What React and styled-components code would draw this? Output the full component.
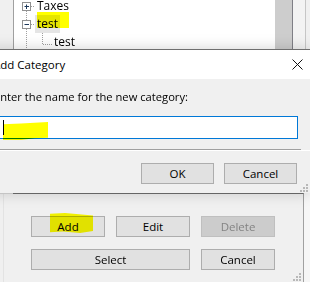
import React from "react";
import styled, { createGlobalStyle } from "styled-components";

const GlobalStyle = createGlobalStyle`
  html, body { margin: 0; padding: 0; background: #f0f0f0; }
  body {
    font-family: "Open Sans", "Noto Sans", sans-serif;
    font-size: 12px;
    color: #000;
  }
`;

const Screen = styled.div`
  width: 310px;
  height: 282px;
  overflow: hidden;
  display: flex;
  flex-direction: column;
  background: #f0f0f0;
`;

/* ---------- window behind, top part (tree) ---------- */

const BackTop = styled.div`
  flex: none;
  height: 49px;
  display: flex;
`;

const SideStrip = styled.div`
  width: 13px;
  flex: none;
  background: #f0f0f0;
  overflow: hidden;
  font-size: 12px;
  line-height: 16px;
  white-space: nowrap;
  padding-top: 2px;
  box-sizing: border-box;
`;

const SideText = styled.div`
  margin-left: -8px;
`;

const TreeBox = styled.div`
  width: 261px;
  flex: none;
  background: #fff;
  border-left: 1px solid #a0a0a0;
  overflow: hidden;
`;

const TreeList = styled.div`
  margin-top: -3px;
`;

const TreeRow = styled.div`
  height: 18px;
  display: flex;
  align-items: center;
`;

const NodeLabel = styled.span`
  position: relative;
  height: 18px;
  line-height: 18px;
  padding: 0 2px;
  background: ${(p) => (p.$selected ? "#e5e5e5" : "transparent")};
`;

const Marker = styled.span`
  position: absolute;
  left: ${(p) => p.$left}px;
  top: ${(p) => p.$top}px;
  width: ${(p) => p.$w}px;
  height: ${(p) => p.$h}px;
  background: #ffff00;
  mix-blend-mode: multiply;
  clip-path: ${(p) => p.$clip || "none"};
  pointer-events: none;
`;

const Scrollbar = styled.div`
  width: 17px;
  flex: none;
  background: #cdcdcd;
`;

const FrameLine = styled.div`
  width: 1px;
  flex: none;
  background: ${(p) => p.$color};
`;

const FrameGap = styled.div`
  width: ${(p) => p.$w}px;
  flex: none;
  background: ${(p) => p.$color || "#f0f0f0"};
`;

/* ---------- dialog ---------- */

const Dialog = styled.div`
  position: relative;
  z-index: 1;
  flex: none;
  margin-left: -12px;
  border-top: 1px solid #6f6f6f;
  background: #f0f0f0;
  box-shadow: 0 0 14px rgba(0, 0, 0, 0.18);
  font-size: 11px;
`;

const TitleBar = styled.div`
  height: 29px;
  background: #fff;
  display: flex;
  align-items: center;
  padding-left: 5px;
`;

const Title = styled.span`
  font-size: 11.5px;
`;

const CloseBox = styled.div`
  margin-left: auto;
  margin-right: 7px;
  display: flex;
`;

const DialogBody = styled.div`
  padding: 10px 0 0 6px;
`;

const Prompt = styled.div`
  line-height: 16px;
  font-size: 11.2px;
`;

const TextBox = styled.div`
  position: relative;
  margin: 11px 12px 0 0;
  height: 23px;
  box-sizing: border-box;
  border: 1px solid #0078d7;
  background: #fff;
  display: flex;
  align-items: center;
  padding-left: 8px;
`;

const Caret = styled.span`
  width: 1px;
  height: 15px;
  margin-top: -1px;
  background: #000;
`;

const Separator = styled.div`
  margin: 10px 9px 0 0;
  border-top: 1px solid #a0a0a0;
`;

const ButtonBar = styled.div`
  border-top: 1px solid #fff;
  padding: 12px 13px 9px 0;
  display: flex;
  justify-content: flex-end;
  gap: 10px;
`;

const Button = styled.div`
  position: relative;
  box-sizing: border-box;
  width: ${(p) => p.$w || 73}px;
  height: 21px;
  display: flex;
  align-items: center;
  justify-content: center;
  font-size: 11.5px;
  background: ${(p) => (p.$disabled ? "#cccccc" : "#e1e1e1")};
  border: 1px solid ${(p) => (p.$disabled ? "#bfbfbf" : "#adadad")};
  color: ${(p) => (p.$disabled ? "#838383" : "#000")};
  grid-column: ${(p) => (p.$span ? `span ${p.$span}` : "auto")};
`;

const Grip = styled.div`
  position: absolute;
  right: ${(p) => p.$right}px;
  bottom: ${(p) => p.$bottom}px;
  display: flex;
`;

/* ---------- window behind, bottom part ---------- */

const BackBottom = styled.div`
  flex: 1;
  display: flex;
`;

const BottomSide = styled.div`
  width: 13px;
  flex: none;
  box-sizing: border-box;
  border-top: 1px solid #d6d6d6;
  background: linear-gradient(to right, #f0f0f0 3px, #e3e3e3 3px, #e3e3e3 4px, #f0f0f0 4px);
`;

const Panel = styled.div`
  position: relative;
  width: 272px;
  flex: none;
  border-top: 1px solid #6f6f6f;
  border-right: 1px solid #a0a0a0;
  padding: 22px 0 0 18px;
`;

const ButtonGrid = styled.div`
  display: grid;
  grid-template-columns: 74px 74px 74px;
  grid-auto-rows: 21px;
  column-gap: 11px;
  row-gap: 12px;
`;

const BottomRight = styled.div`
  flex: 1;
  background: #f6f6f6;
`;

/* ---------- drawings ---------- */

const Expander = ({ open, lineAbove }) => (
  <svg width="21" height="18" style={{ flex: "none", display: "block" }}>
    {lineAbove && (
      <line x1="12.5" y1="0" x2="12.5" y2="5" stroke="#a0a0a0" strokeDasharray="1 1" />
    )}
    <line x1="12.5" y1="14" x2="12.5" y2="18" stroke="#a0a0a0" strokeDasharray="1 1" />
    <line x1="17" y1="9.5" x2="21" y2="9.5" stroke="#a0a0a0" strokeDasharray="1 1" />
    <rect x="8.5" y="5.5" width="8" height="8" fill="#fff" stroke="#919191" />
    <line x1="10.5" y1="9.5" x2="15" y2="9.5" stroke="#1e395b" />
    {!open && <line x1="12.5" y1="7.5" x2="12.5" y2="12" stroke="#1e395b" />}
  </svg>
);

const ChildLines = () => (
  <>
    <svg width="21" height="18" style={{ flex: "none", display: "block" }}>
      <line x1="12.5" y1="0" x2="12.5" y2="18" stroke="#a0a0a0" strokeDasharray="1 1" />
    </svg>
    <svg width="17" height="18" style={{ flex: "none", display: "block" }}>
      <line x1="7.5" y1="0" x2="7.5" y2="11" stroke="#a0a0a0" strokeDasharray="1 1" />
      <line x1="8" y1="11.5" x2="17" y2="11.5" stroke="#a0a0a0" strokeDasharray="1 1" />
    </svg>
  </>
);

const CloseIcon = () => (
  <svg width="11" height="11" viewBox="0 0 11 11">
    <path d="M0.5 0.5 L10.5 10.5 M10.5 0.5 L0.5 10.5" stroke="#111" strokeWidth="1" />
  </svg>
);

const GripDots = () => (
  <svg width="8" height="8" viewBox="0 0 8 8">
    {[
      [6, 0],
      [3, 3],
      [6, 3],
      [0, 6],
      [3, 6],
      [6, 6],
    ].map(([x, y]) => (
      <rect key={`${x}-${y}`} x={x} y={y} width="2" height="2" fill="#b8b8b8" />
    ))}
  </svg>
);

export default function App() {
  return (
    <Screen>
      <GlobalStyle />
      <BackTop>
        <SideStrip>
          <SideText>ξ</SideText>
          <SideText>&nbsp;</SideText>
          <SideText>r</SideText>
        </SideStrip>
        <TreeBox>
          <TreeList>
            <TreeRow>
              <Expander />
              <NodeLabel>Taxes</NodeLabel>
            </TreeRow>
            <TreeRow>
              <Expander open lineAbove />
              <NodeLabel $selected>
                <Marker $left={2} $top={-3} $w={32} $h={16} />
                test
              </NodeLabel>
            </TreeRow>
            <TreeRow>
              <ChildLines />
              <NodeLabel>test</NodeLabel>
            </TreeRow>
          </TreeList>
        </TreeBox>
        <Scrollbar />
        <FrameLine $color="#7f7f86" />
        <FrameGap $w={12} $color="#f3f3f3" />
        <FrameLine $color="#c6c6c6" />
        <FrameGap $w={4} />
      </BackTop>

      <Dialog>
        <TitleBar>
          <Title>Add Category</Title>
          <CloseBox>
            <CloseIcon />
          </CloseBox>
        </TitleBar>
        <DialogBody>
          <Prompt>Enter the name for the new category:</Prompt>
          <TextBox>
            <Caret />
            <Marker
              $left={8}
              $top={5}
              $w={45}
              $h={18}
              $clip="polygon(0 12%, 40% 8%, 70% 4%, 100% 0, 100% 88%, 70% 90%, 40% 100%, 0 100%)"
            />
          </TextBox>
          <Separator />
        </DialogBody>
        <ButtonBar>
          <Button>OK</Button>
          <Button>Cancel</Button>
        </ButtonBar>
        <Grip $right={2} $bottom={1}>
          <GripDots />
        </Grip>
      </Dialog>

      <BackBottom>
        <BottomSide />
        <Panel>
          <ButtonGrid>
            <Button $w={74}>
              <Marker
                $left={18}
                $top={-4}
                $w={43}
                $h={20}
                $clip="polygon(0 4%, 35% 0, 100% 12%, 100% 90%, 70% 100%, 30% 92%, 0 96%)"
              />
              Add
            </Button>
            <Button $w={74}>Edit</Button>
            <Button $w={74} $disabled>
              Delete
            </Button>
            <Button $w={159} $span={2}>
              Select
            </Button>
            <Button $w={74}>Cancel</Button>
          </ButtonGrid>
          <Grip $right={2} $bottom={1}>
            <GripDots />
          </Grip>
        </Panel>
        <BottomRight />
      </BackBottom>
    </Screen>
  );
}
